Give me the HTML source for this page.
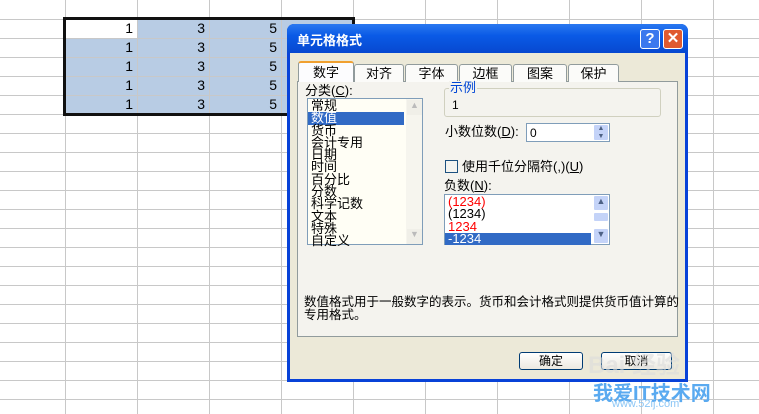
<!DOCTYPE html>
<html><head><meta charset="utf-8">
<style>
*{margin:0;padding:0;box-sizing:border-box}
body{width:759px;height:414px;overflow:hidden;background:#fff;position:relative;font-family:"Liberation Sans","Noto Sans CJK SC","WenQuanYi Zen Hei",sans-serif;font-size:12px;color:#000}
.a{position:absolute}
.vl{position:absolute;top:0;width:1px;height:414px;background:#c8c8c8}
.hl{position:absolute;left:0;height:1px;width:759px;background:#c8c8c8}
.num{position:absolute;font-size:14px;text-align:right;width:60px}
.tab{position:absolute;top:64px;height:18px;background:#fbfbf9;border:1px solid #919b9c;border-bottom:none;border-radius:3px 3px 0 0;text-align:center;font-size:13px;line-height:17px}
.li{height:12.3px;line-height:12px;padding-left:3px;font-size:13px}
.sb{position:absolute;width:16px;background:#c4d3f8;border:1px solid #fff;border-radius:2px}
</style></head><body>
<div class="a" style="left:65px;top:19px;width:288px;height:95px;background:#b8cce4"></div>
<div class="a" style="left:65px;top:19px;width:72px;height:19px;background:#fff"></div>
<div class="vl" style="left:65px"></div><div class="vl" style="left:137px"></div><div class="vl" style="left:209px"></div><div class="vl" style="left:281px"></div><div class="vl" style="left:353px"></div><div class="vl" style="left:425px"></div><div class="vl" style="left:497px"></div><div class="vl" style="left:569px"></div><div class="vl" style="left:641px"></div><div class="vl" style="left:713px"></div>
<div class="hl" style="top:19px"></div><div class="hl" style="top:38px"></div><div class="hl" style="top:57px"></div><div class="hl" style="top:76px"></div><div class="hl" style="top:95px"></div><div class="hl" style="top:114px"></div><div class="hl" style="top:133px"></div><div class="hl" style="top:152px"></div><div class="hl" style="top:171px"></div><div class="hl" style="top:190px"></div><div class="hl" style="top:209px"></div><div class="hl" style="top:228px"></div><div class="hl" style="top:247px"></div><div class="hl" style="top:266px"></div><div class="hl" style="top:285px"></div><div class="hl" style="top:304px"></div><div class="hl" style="top:323px"></div><div class="hl" style="top:342px"></div><div class="hl" style="top:361px"></div><div class="hl" style="top:380px"></div><div class="hl" style="top:399px"></div>
<div class="a" style="left:63px;top:17px;width:292px;height:99px;border:3px solid #111"></div>
<div class="num" style="left:73px;top:20px">1</div><div class="num" style="left:145px;top:20px">3</div><div class="num" style="left:217px;top:20px">5</div>
<div class="num" style="left:73px;top:39px">1</div><div class="num" style="left:145px;top:39px">3</div><div class="num" style="left:217px;top:39px">5</div>
<div class="num" style="left:73px;top:58px">1</div><div class="num" style="left:145px;top:58px">3</div><div class="num" style="left:217px;top:58px">5</div>
<div class="num" style="left:73px;top:77px">1</div><div class="num" style="left:145px;top:77px">3</div><div class="num" style="left:217px;top:77px">5</div>
<div class="num" style="left:73px;top:96px">1</div><div class="num" style="left:145px;top:96px">3</div><div class="num" style="left:217px;top:96px">5</div>

<div class="a" style="left:287px;top:24px;width:401px;height:358px;background:#0842d8;border-radius:7px 7px 0 0"></div>
<div class="a" style="left:287px;top:24px;width:401px;height:29px;background:linear-gradient(#2a78f0,#0a5ae6 40%,#0748d0);border-radius:7px 7px 0 0"></div>
<div class="a" style="left:297px;top:30px;color:#fff;font-weight:bold;font-size:13px">单元格格式</div>
<div class="a" style="left:640px;top:29px;width:20px;height:20px;background:#3b78ee;border:1px solid #fff;border-radius:3px;color:#fff;font-weight:bold;font-size:15px;text-align:center;line-height:18px">?</div>
<div class="a" style="left:663px;top:29px;width:20px;height:20px;background:#e05a30;border:1px solid #fff;border-radius:3px;color:#fff;font-weight:bold;font-size:15px;text-align:center;line-height:18px">✕</div>
<div class="a" style="left:290px;top:53px;width:395px;height:326px;background:#ece9d8"></div>
<div class="a" style="left:297px;top:81px;width:381px;height:256px;background:#f4f3ee;border:1px solid #919b9c"></div>
<div class="tab" style="left:298px;top:61px;height:21px;width:56px;background:#fcfcfe;border-top:2px solid #f0a030;z-index:2;line-height:19px">数字</div>
<div class="tab" style="left:354px;width:50px">对齐</div>
<div class="tab" style="left:405px;width:53px">字体</div>
<div class="tab" style="left:459px;width:53px">边框</div>
<div class="tab" style="left:513px;width:54px">图案</div>
<div class="tab" style="left:568px;width:51px">保护</div>
<div class="a" style="left:305px;top:84px;font-size:13px;line-height:14px">分类(<u>C</u>):</div>
<div class="a" style="left:307px;top:98px;width:116px;height:147px;background:#fffef5;border:1px solid #7f9db9;padding-top:1px">
<div class="li">常规</div><div class="li" style="background:#316ac5;color:#fff;width:96px">数值</div><div class="li">货币</div><div class="li">会计专用</div><div class="li">日期</div><div class="li">时间</div><div class="li">百分比</div><div class="li">分数</div><div class="li">科学记数</div><div class="li">文本</div><div class="li">特殊</div><div class="li">自定义</div>
</div>
<div class="a" style="left:406px;top:99px;width:16px;height:145px;background:#f6f5ee"></div>
<div class="a" style="left:407px;top:100px;width:15px;height:15px;background:#f0efe8;color:#bbb;font-size:9px;text-align:center">▲</div>
<div class="a" style="left:407px;top:229px;width:15px;height:15px;background:#f0efe8;color:#bbb;font-size:9px;text-align:center">▼</div>
<div class="a" style="left:444px;top:88px;width:217px;height:29px;border:1px solid #d0d0bf;border-radius:3px"></div>
<div class="a" style="left:449px;top:81px;color:#0046d5;background:#f4f3ee;padding:0 1px;font-size:13px;line-height:14px">示例</div>
<div class="a" style="left:452px;top:98px">1</div>
<div class="a" style="left:445px;top:125px;font-size:13px;line-height:14px">小数位数(<u>D</u>):</div>
<div class="a" style="left:526px;top:123px;width:84px;height:19px;background:#fff;border:1px solid #7f9db9;padding:2px 3px">0</div>
<div class="sb" style="left:593px;top:124px;height:17px;font-size:7px;line-height:8px;text-align:center;color:#4d6185">▲<br>▼</div>
<div class="a" style="left:445px;top:160px;width:13px;height:13px;border:1px solid #1c5180;background:#f4f4f0"></div>
<div class="a" style="left:462px;top:160px;font-size:13px;line-height:14px">使用千位分隔符(,)(<u>U</u>)</div>
<div class="a" style="left:444px;top:179px;font-size:13px;line-height:14px">负数(<u>N</u>):</div>
<div class="a" style="left:444px;top:194px;width:166px;height:51px;background:#fff;border:1px solid #7f9db9;padding-top:1px">
<div class="li" style="color:#f00">(1234)</div><div class="li">(1234)</div><div class="li" style="color:#f00">1234</div><div class="li" style="background:#316ac5;color:#fff;width:146px">-1234</div>
</div>
<div class="sb" style="left:593px;top:195px;height:16px;font-size:9px;text-align:center;color:#4d6185">▲</div>
<div class="sb" style="left:593px;top:212px;height:10px"></div>
<div class="sb" style="left:593px;top:228px;height:16px;font-size:9px;text-align:center;color:#4d6185">▼</div>
<div class="a" style="left:304px;top:296px;line-height:13px;font-size:12.5px">数值格式用于一般数字的表示。货币和会计格式则提供货币值计算的<br>专用格式。</div>
<div class="a" style="left:519px;top:352px;width:64px;height:18px;background:linear-gradient(#fff,#ece9e0);border:1px solid #003c74;border-radius:3px;text-align:center;line-height:16px">确定</div>
<div class="a" style="left:601px;top:352px;width:71px;height:18px;background:linear-gradient(#fff,#ece9e0);border:1px solid #003c74;border-radius:3px;text-align:center;line-height:16px">取消</div>
<div class="a" style="left:588px;top:345px;font-size:24px;font-weight:bold;color:rgba(220,220,220,.6)">Bai 经验</div>
<div class="a" style="left:593px;top:377px;font-size:20px;font-weight:bold;color:#5aaaf0">我爱IT技术网</div>
<div class="a" style="left:612px;top:398px;font-size:11px;color:#8cc6f5">www.52ij.com</div>
</body></html>
